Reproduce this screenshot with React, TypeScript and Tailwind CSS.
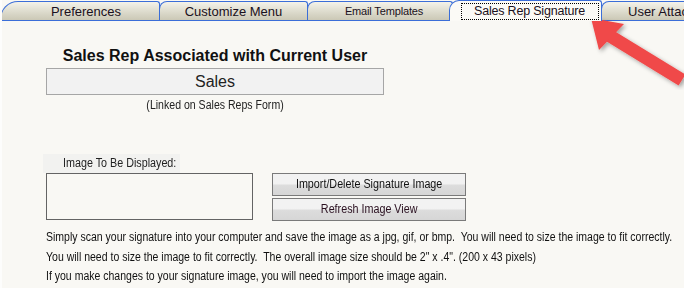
import React from "react";

const tabBg = "bg-[linear-gradient(#f4f3ea,#d9d7c8_60%,#c9c6b3)]";

function Tab({ label, className = "", textClass = "text-[13px]" }: { label: string; className?: string; textClass?: string }) {
  return (
    <div
      className={`shrink-0 h-[20px] border-t border-l border-r border-[#3b6ed8] rounded-tl-[8px] rounded-tr-[3px] flex items-center justify-center ${tabBg} ${className}`}
    >
      <span className={`leading-none text-[#1a1020] whitespace-nowrap ${textClass}`}>{label}</span>
    </div>
  );
}

const btn =
  "w-[194px] h-[23px] border border-[#7a7a7a] bg-[linear-gradient(#f2f2f2_45%,#dcdcdc_55%,#d6d6d6)] text-[12.5px] text-[#111] flex items-center justify-center";

export default function App() {
  return (
    <div
      className="relative w-[684px] h-[288px] overflow-hidden bg-[#f9f8f4] border-l-2 border-[#fdfdfc]"
      style={{ fontFamily: '"Liberation Sans", Arial, sans-serif' }}
    >
      {/* tab strip */}
      <div className="relative h-[21px] flex items-end pt-[1px]">
        <div className="absolute left-0 right-0 bottom-0 h-[1px] bg-[#3b6ed8]" />
        <Tab label="Preferences" className="w-[160px] rounded-tl-[18px] -ml-[2px]" textClass="text-[13px] ml-[12px]" />
        <Tab label="Customize Menu" className="w-[149px] -ml-[1px]" />
        <Tab label="Email Templates" className="w-[146px] -ml-[1px]" textClass="text-[11px] tracking-[-0.15px] ml-[8px]" />
        <div className="shrink-0 relative z-10 h-[21px] w-[153px] -ml-[4px] border-t border-l border-r border-[#3b6ed8] rounded-tl-[10px] rounded-tr-[3px] bg-[#fbfaf6] flex items-center justify-center pt-[1px]">
          <div className="ml-[8px] h-[17px] w-[138px] border border-dotted border-black flex items-center justify-center">
            <span className="text-[12.5px] tracking-[-0.2px] leading-none text-[#1a1020] whitespace-nowrap">Sales Rep Signature</span>
          </div>
        </div>
        <Tab label="User Attachments" className="w-[120px] -ml-[1px] justify-start" textClass="text-[13px] ml-[26px]" />
      </div>

      {/* content */}
      <div className="pl-[44px] pt-[26px]">
        <div className="w-[338px] flex flex-col items-center">
          <div className="text-[16px] font-bold leading-[18px] text-[#111] whitespace-nowrap">Sales Rep Associated with Current User</div>
          <div className="mt-[3px] w-[338px] h-[27px] border border-[#a6a6a6] bg-[#f2f2f2] flex items-center justify-center text-[16px] text-[#222]">
            Sales
          </div>
          <div className="mt-[3px] text-[12px] leading-[14px] text-[#222] whitespace-nowrap scale-x-[0.88]">(Linked on Sales Reps Form)</div>
        </div>

        <div className="mt-[42px] -ml-[3px] w-[137px] h-[19px] bg-[#f2f2f0] flex items-center pl-[20px] text-[12.5px] text-[#222] whitespace-nowrap">
          <span className="inline-block origin-left scale-x-[0.86]">Image To Be Displayed:</span>
        </div>
        <div className="flex gap-[19px]">
          <div className="w-[207px] h-[47px] border border-[#646464]" />
          <div className="flex flex-col gap-[2px]">
            <button className={btn}>
              <span className="inline-block whitespace-nowrap scale-x-[0.86]">Import/Delete Signature Image</span>
            </button>
            <button className={btn}>
              <span className="inline-block whitespace-nowrap scale-x-[0.86] text-[#2a1020]">Refresh Image View</span>
            </button>
          </div>
        </div>

        <div className="mt-[7px] text-[12.5px] leading-[19.5px] text-[#111] whitespace-nowrap origin-left scale-x-[0.841]">
          <div>Simply scan your signature into your computer and save the image as a jpg, gif, or bmp.&nbsp; You will need to size the image to fit correctly.</div>
          <div>You will need to size the image to fit correctly.&nbsp; The overall image size should be 2" x .4". (200 x 43 pixels)</div>
          <div>If you make changes to your signature image, you will need to import the image again.</div>
        </div>
      </div>

      {/* red arrow */}
      <svg className="absolute left-[570px] top-[10px]" width="114" height="80" viewBox="0 0 114 80">
        <defs>
          <filter id="sh" x="-20%" y="-20%" width="150%" height="150%">
            <feDropShadow dx="2" dy="2" stdDeviation="2" floodColor="#000" floodOpacity="0.35" />
          </filter>
        </defs>
        <g filter="url(#sh)">
          <line x1="110" y1="70" x2="38" y2="26" stroke="#f04848" strokeWidth="13" strokeLinecap="butt" />
          <polygon points="19,8 52,14 27,40" fill="#f04848" />
        </g>
      </svg>
    </div>
  );
}
